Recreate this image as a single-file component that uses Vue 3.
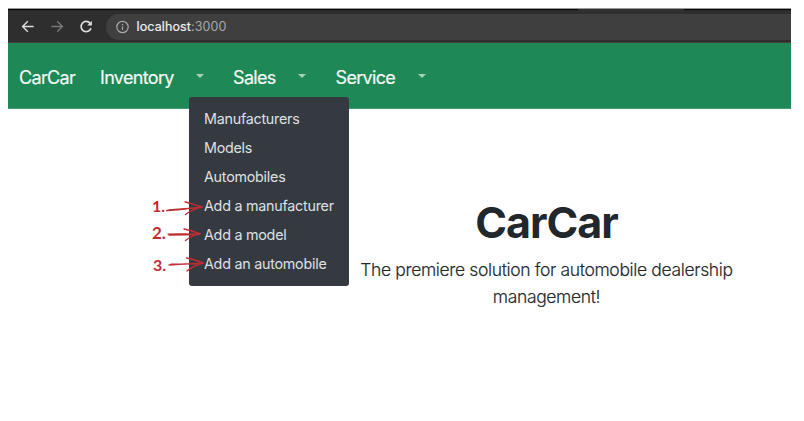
<script setup>
const menus = [
  { label: 'Inventory', cls: 'inventory' },
  { label: 'Sales', cls: 'sales' },
  { label: 'Service', cls: 'service' },
]
const items = [
  'Manufacturers',
  'Models',
  'Automobiles',
  'Add a manufacturer',
  'Add a model',
  'Add an automobile',
]
</script>

<template>
  <div class="page">
    <div class="window">
      <div class="tabstrip"><span class="tab"></span></div>
      <header class="toolbar">
        <svg class="nav-icons" width="98" height="32" viewBox="8 11 98 32" fill="none" stroke-width="1.4">
          <path d="M33.700 26.500H23M27.800 21.300L22.600 26.500L27.800 31.700" stroke="#dedede" />
          <path d="M51.300 26.500H62M57.200 21.300L62.400 26.500L57.200 31.700" stroke="#777" />
          <path d="M90.200 23.400A5.100 5.100 0 1 0 91 28.200" stroke="#dedede" stroke-width="1.700" />
          <path d="M91.900 20.800V25.500H87.200Z" fill="#dedede" />
        </svg>
        <div class="address">
          <svg width="14" height="14" viewBox="0 0 14 14" fill="none" stroke="#a8a8a8" stroke-width="1.2">
            <circle cx="7.500" cy="7" r="5.700" />
            <path d="M7.500 6.200V10M7.500 3.900V5.200" />
          </svg>
          <span class="url">localhost<i>:3000</i></span>
        </div>
      </header>
      <nav class="navbar">
        <a class="brand">CarCar</a>
        <div v-for="m in menus" :key="m.label" class="menu" :class="m.cls">
          <a>{{ m.label }}</a>
          <span class="caret"></span>
          <ul v-if="m.label === 'Inventory'" class="dropdown">
            <li v-for="i in items" :key="i">{{ i }}</li>
          </ul>
        </div>
      </nav>
      <main class="hero">
        <h1>CarCar</h1>
        <p>The premiere solution for automobile dealership<br />management!</p>
      </main>
    </div>
    <div class="notes">
      <span class="n1">1.</span>
      <span class="n2">2.</span>
      <span class="n3">3.</span>
      <svg width="60" height="80" viewBox="150 198 60 80" fill="none" stroke="#c02c31" stroke-width="1.300" stroke-linecap="round" stroke-linejoin="round">
        <path d="M166.500 210.500C176 210 190 208.500 202 206.800M185 202C190 203 197 205.500 202.500 206.800C195 208.500 190 211 185.500 214.500M169 209.800L201 207.500" />
        <path d="M168 234.200C179 233.500 190 234.500 200 233.900M184 229C189 230 195 232 200.500 233.900C194 235 189 237.500 185.500 240.500M169 235L199 234.500" />
        <path d="M169 265C181 263.500 192 264.500 203 263M186.500 258C192 259 198 261 203.500 263C196 265 191 267.500 187 271M171 264.200L202 263.800" />
      </svg>
    </div>
  </div>
</template>

<style>
body { margin: 0; background: #fff; }
</style>
<style scoped>
.page { position: relative; box-sizing: border-box; width: 804px; height: 421px; padding: 8px 13px 0 8px; overflow: hidden; background: #fff; font-family: Inter, "Liberation Sans", sans-serif; }
.window { display: flex; flex-direction: column; }
.tabstrip { box-sizing: border-box; height: 3px; border-top: 1px solid #999; background: linear-gradient(#050505 1px, #292929 1px); padding-left: 570px; }
.tab { display: block; width: 106px; height: 2px; background: #303030; }
.toolbar { box-sizing: border-box; height: 32px; display: flex; align-items: flex-start; background: #2e2e2e; border-bottom: 1px solid #424242; }
.nav-icons { flex: none; }
.address { flex: 1; height: 26px; margin-top: 3px; display: flex; align-items: center; gap: 7px; padding-left: 9px; background: #3f3f3f; border-radius: 13px 0 0 13px; }
.url { padding-left: 0.5px; margin-top: -1px; font-size: 12.5px; line-height: 24px; color: #f0f0f0; letter-spacing: 0.12px; -webkit-text-stroke: 0.2px; }
.url i { font-style: normal; color: #a8a8a8; -webkit-text-stroke: 0; }
.navbar { box-sizing: border-box; height: 66px; display: flex; align-items: center; padding: 3px 0 0 11px; background: #1e8856; border-bottom: 1px solid #459c74; color: #f3f8f5; font-size: 18px; line-height: 27px; letter-spacing: -0.67px; }
.navbar a { display: block; white-space: nowrap; -webkit-text-stroke: 0.2px; }
.brand { width: 81px; }
.menu { position: relative; display: flex; align-items: center; }
.inventory { width: 133px; }
.sales { width: 102.5px; }
.service { width: 90px; }
.menu a { flex: 1; }
.caret { flex: none; border: 4.5px solid transparent; border-top-color: #a5d0ba; border-bottom: 0; margin-top: -2px; }
.inventory .caret { margin-right: 29px; }
.sales .caret { margin-right: 29.5px; }
.service .caret { margin-right: 0; }
.dropdown { position: absolute; left: 89px; top: 33.5px; z-index: 1; box-sizing: border-box; width: 159.5px; height: 188.5px; margin: 0; padding: 7px 15px; list-style: none; background: #353a41; border-radius: 3px; font-size: 14.3px; letter-spacing: -0.24px; color: #dee0e2; }
.dropdown li { height: 29px; line-height: 29px; white-space: nowrap; }
.hero { width: 420px; margin-left: 328.5px; padding-top: 85px; text-align: center; color: #22272c; }
h1 { margin: 0; font-size: 43px; line-height: 56px; font-weight: 700; letter-spacing: -1px; }
p { margin: 6px 0 0; font-size: 17.5px; line-height: 27px; font-weight: 300; letter-spacing: -0.36px; white-space: nowrap; -webkit-text-stroke: 0.15px; }
.notes { position: absolute; left: 150px; top: 198px; width: 60px; height: 80px; z-index: 2; color: #c42c31; font-family: Lato, sans-serif; font-size: 16px; font-weight: 700; line-height: 18px; }
.notes svg { position: absolute; left: 0; top: 0; }
.notes span { position: absolute; }
.n1 { left: 2px; top: -1px; }
.n2 { left: 2px; top: 26px; font-size: 17px; }
.n3 { left: 3px; top: 58px; }
</style>
